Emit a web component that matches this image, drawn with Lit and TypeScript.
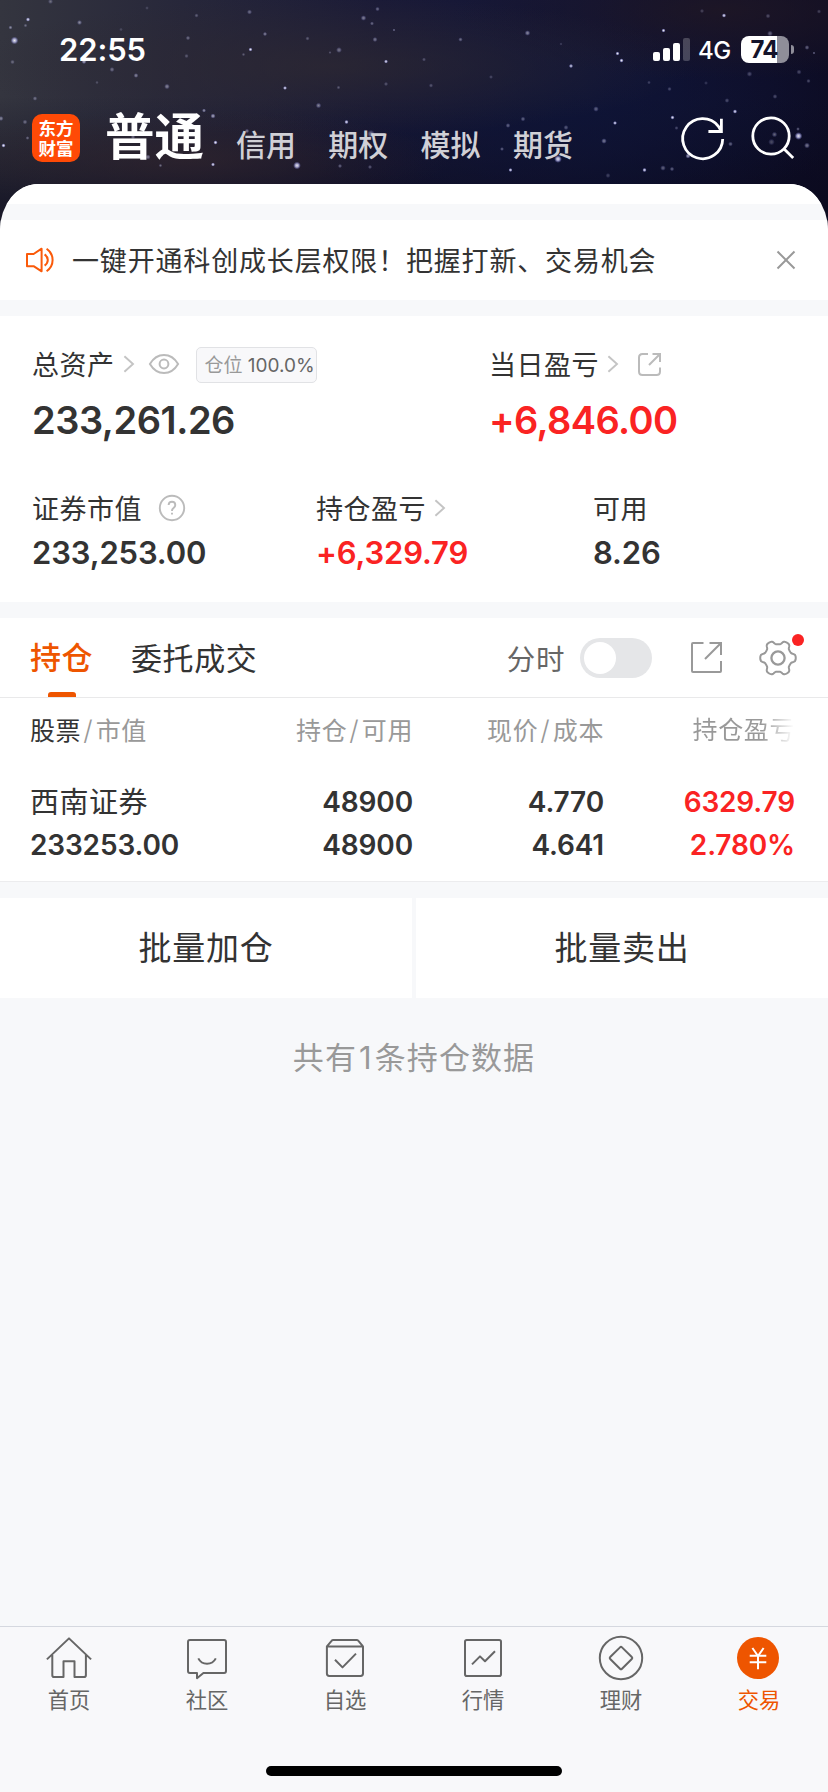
import { LitElement, html, css, svg } from "lit";
import { customElement } from "lit/decorators.js";
import { classMap } from "lit/directives/class-map.js";

// x, y, radius, opacity
const STARS: number[][] = [
  [28, 19.5, 1.7, 1], [14.5, 40.5, 3, 1], [10.5, 27.5, 1.6, 0.5], [25.5, 25.5, 1.5, 0.35], [79.5, 22.5, 2, 0.5],
  [50.5, 1.5, 2, 0.35], [12.5, 62, 1.8, 0.35], [84, 61.5, 2, 0.7], [112, 69.5, 2, 0.4], [136, 75.5, 1.9, 0.5],
  [97, 82.5, 1.4, 0.25], [167, 86.5, 2.2, 0.5], [188, 38, 1.8, 0.4], [186.5, 56, 1.7, 0.3], [196.5, 15.5, 1.7, 0.3],
  [250.5, 49.5, 1.6, 1], [243.5, 54.5, 1.4, 0.3], [265, 34, 1.7, 0.5], [249.5, 12, 2, 0.4], [285, 88, 1.6, 1],
  [307.5, 38.5, 1.7, 0.3], [339, 50, 2.3, 0.45], [330, 52.5, 1.2, 0.3], [363.5, 18, 2.2, 0.5], [377.5, 9, 1.8, 0.4],
  [372, 23.5, 1.6, 0.4], [386, 61.5, 1.6, 1], [375, 39.5, 2, 0.45], [386, 84, 1.7, 0.3], [318.5, 105.5, 2.2, 0.5],
  [338.5, 87.5, 1.5, 0.3], [346.5, 122, 1.7, 1], [371, 134, 3.2, 0.5], [35, 98.5, 1.8, 0.4], [1, 118.5, 2, 0.5],
  [25, 122, 1.9, 0.4], [27.5, 138, 1.5, 0.4], [3.5, 145.5, 1.7, 1], [204, 110.5, 1.6, 0.6], [213, 116, 2, 0.7],
  [215.5, 142.5, 1.7, 1], [213, 164.5, 1.6, 1], [247, 131, 1.8, 0.5], [160.5, 165.5, 1.4, 0.4], [148, 157, 2, 0.5],
  [297, 165.5, 3, 1], [340, 166, 1.7, 0.4], [370, 167, 1.7, 0.35], [133, 137, 1.8, 0.4], [121, 29.5, 1.5, 0.2],
  [147, 8, 1.5, 0.2], [527.5, 33, 2.2, 0.55], [460.5, 39.5, 1.8, 0.4], [424, 59.5, 1.6, 0.3], [663.5, 30.5, 1.6, 1],
  [724, 15.5, 1.7, 1], [617.5, 53.5, 1.6, 1], [621.5, 60.5, 1.7, 1], [571, 66, 1.7, 0.9], [431, 85.5, 1.7, 0.3],
  [491, 77, 1.6, 0.25], [596, 109, 2.2, 0.4], [523, 119, 1.9, 0.4], [508, 125.5, 1.9, 0.4], [615, 123, 1.6, 1],
  [604, 141, 2.2, 0.5], [566, 127.5, 2, 0.35], [502, 149, 1.6, 0.4], [558, 159, 3, 1], [510.5, 170, 1.6, 1],
  [644.5, 170, 1.7, 1], [672.5, 117.5, 1.7, 0.95], [676.5, 128, 1.6, 0.3], [688, 156, 2, 0.7], [735, 111.5, 1.7, 1],
  [727, 100.5, 1.9, 0.3], [775, 96.5, 1.9, 0.3], [669.5, 89, 1.7, 0.3], [649, 82.5, 1.5, 0.25], [749.5, 74, 2.2, 0.3],
  [770, 33.5, 2.3, 0.4], [807, 47.5, 1.9, 0.4], [814, 53, 1.2, 0.4], [799, 72, 2, 0.3], [808.5, 81, 1.7, 0.3],
  [768, 16, 1.9, 0.3], [702, 11, 1.7, 0.25], [819, 11.5, 1.7, 0.25], [798.5, 136, 3, 1], [807, 145.5, 2.3, 0.5],
  [798, 129, 1.5, 0.4], [774.5, 134.5, 2.2, 0.4], [771.5, 142, 2.6, 0.3], [730.5, 144, 1.9, 0.4], [663, 168, 2.2, 0.4],
  [672, 169, 1.8, 0.4], [608, 175.5, 2, 0.25], [561, 44, 1.3, 0.2], [706, 83, 1.6, 0.2], [394, 30, 1.2, 0.4],
];

const chevron = () => svg`<svg class="chev" width="12" height="18" viewBox="0 0 12 18" fill="none"
  stroke="#c4c4c4" stroke-width="1.9"><path d="M1.4 1.3 10 9 1.4 16.7"/></svg>`;

const GEAR = (() => {
  // Six rounded lobes with shallow notches between them.
  const pts: string[] = [];
  for (let i = 0; i <= 180; i++) {
    const a = (i / 180) * Math.PI * 2;
    const c = Math.cos(6 * a);
    const r = 15.7 + 1.9 * Math.tanh(2.1 * c) + 0.2 * c;
    pts.push(`${(19 + r * Math.cos(a)).toFixed(2)} ${(19 + r * Math.sin(a)).toFixed(2)}`);
  }
  return `M${pts.join("L")}Z`;
})();

const NAV = [
  { label: "首页", icon: svg`<path d="M.9 22.4 23 1.4 45.1 22.4M6.3 18V38.2Q6.3 40 8 40H17.5V24.3H28.5V40H38Q39.9 40 39.9 38.2V18"/>` },
  { label: "社区", icon: svg`<path d="M5.9 3H40.1Q42 3 42 4.9V34.1Q42 36 40.1 36H19.4L13 41.2V36H5.9Q4 36 4 34.1V4.9Q4 3 5.9 3ZM14.3 21.4C18 28.6 28 28.6 31.8 21.4"/>` },
  { label: "自选", icon: svg`<path d="M4.9 9.4H41V36.6Q41 39 38.6 39H7.3Q4.9 39 4.9 36.6V9.4L9.8 3.7Q10.3 3 11.2 3H34.8Q35.6 3 36.2 3.7L41 9.4M13 22.8 20.5 30.4 34 16.6"/>` },
  { label: "行情", icon: svg`<rect x="5" y="3" width="36" height="36" rx="1.8"/><path d="M12 27.4 20 19.4 25 24.2 35 14.2"/>` },
  { label: "理财", icon: svg`<circle cx="23" cy="21" r="21.2"/><path d="M22 10.4Q23 9.4 24 10.4L33.8 20Q34.8 21 33.8 22L24 31.8Q23 32.8 22 31.8L12.2 22Q11.2 21 12.2 20Z"/>` },
  { label: "交易", active: true, icon: svg`<circle cx="22" cy="21" r="21" fill="#ee5500" stroke="none"/><path stroke="#fff" d="M16.4 11 22 19 27.6 11M22 19V32.2M13.7 18.7H30.3M13.7 25.2H30.3"/>` },
];

@customElement("app-root")
export class AppRoot extends LitElement {
  static styles = css`
    :host {
      display: block; position: relative; width: 828px; height: 1792px; overflow: hidden;
      background: #f7f8fa; color: #333;
      font-family: Inter, "Noto Sans CJK SC", sans-serif;
    }
    * { box-sizing: border-box; }
    svg { display: block; flex: none; overflow: visible; }
    .page { position: relative; height: 100%; display: flex; flex-direction: column; }
    .sky {
      position: absolute; left: 0; top: 0; width: 828px; height: 240px;
      background:
        radial-gradient(ellipse 260px 50px at 190px 160px, rgba(52, 38, 44, .6), transparent),
        radial-gradient(ellipse 360px 70px at 330px 66px, rgba(46, 41, 50, .75), transparent),
        radial-gradient(ellipse 260px 70px at 720px 10px, rgba(32, 23, 36, .8), transparent),
        radial-gradient(ellipse 300px 110px at 560px 110px, rgba(14, 20, 54, .8), transparent),
        linear-gradient(180deg, transparent 40%, rgba(10, 9, 28, .65) 85%),
        linear-gradient(90deg, #34353f 0, #27273a 22%, #1a1a37 46%, #111436 72%, #0d0c24 100%);
    }
    .status { height: 98px; padding: 32px 34px 0 59px; display: flex; align-items: flex-start; color: #fff; }
    .time { flex: 1; font-size: 31px; line-height: 36px; font-weight: 600; letter-spacing: -.1px; }
    .bars { margin: 6px 8px 0 0; }
    .net { width: 43px; font-size: 24px; line-height: 37px; font-weight: 500; letter-spacing: -.4px; }
    .battery {
      margin-top: 4px; width: 48px; height: 27px; border-radius: 8px; text-align: center;
      background: linear-gradient(90deg, #fff 36px, #8f8e99 36px);
      color: #14142b; font-size: 24px; font-weight: 700; line-height: 28px; letter-spacing: -.8px; padding-right: 2px;
    }
    .nub { margin: 13px 0 0 2px; width: 3px; height: 9px; border-radius: 0 3px 3px 0; background: #8f8e99; }
    .head { height: 86px; display: flex; padding: 16px 34px 0 32px; color: #fff; }
    .logo {
      width: 48px; height: 48px; border-radius: 10px; background: #ff4a06; padding: 4px 6px 0;
      font: 700 17.5px/20px "Noto Sans CJK SC", sans-serif; text-align: center; word-break: break-all;
    }
    .cur { margin: -7px 0 0 25px; width: 99px; font-size: 49.5px; line-height: 60px; font-weight: 600; white-space: nowrap; }
    .tab { margin-left: 4px; margin-top: 11px; width: 88.3px; font-size: 30px; line-height: 40px; font-weight: 500; color: #d0d0d6; padding-left: 1px; }
    .tabs { display: flex; flex: 1; padding-left: 27px; }
    .sheet { border-radius: 38px 38px 0 0 / 46px 46px 0 0; overflow: hidden; background: #f7f8fa; flex: 1; display: flex; flex-direction: column; }
    .lip { height: 20px; background: #fff; }
    .notice {
      margin-top: 16px; height: 80px; background: #fff; display: flex; align-items: center; padding: 0 33px 0 26px;
      font-size: 27px; letter-spacing: .83px;
    }
    .notice span { flex: 1; padding: 0 0 2px 18px; white-space: nowrap; }
    .assets { margin-top: 16px; height: 286px; background: #fff; padding: 28px 32px 0; }
    .top { display: grid; grid-template-columns: 457px 1fr; height: 144px; align-content: start; }
    .sub { display: grid; grid-template-columns: 284px 277px 1fr; }
    .label { height: 40px; display: flex; align-items: center; font-size: 27px; letter-spacing: .5px; white-space: nowrap; }
    .label > span { padding-bottom: 2px; }
    .chev { margin-left: 8px; }
    .eye { margin-left: 14px; }
    .pos {
      margin: 2px 0 0 17px; width: 121px; height: 36px; border: 1.5px solid #e1e2e5; border-radius: 5px; background: #f8f8fa;
      font-size: 19px; line-height: 35px; color: #999; letter-spacing: 0; padding-left: 8px;
    }
    .pos b { font-weight: 400; color: #666; letter-spacing: 0; }
    .big { margin-top: 11px; font-size: 38px; line-height: 50px; font-weight: 600; letter-spacing: -.45px; }
    .big.red { letter-spacing: -.6px; }
    .mid { margin-top: 5px; font-size: 31px; line-height: 40px; font-weight: 600; letter-spacing: -.15px; }
    .red { color: #fa2323; }
    .holdings { margin-top: 16px; height: 264px; background: #fff; border-bottom: 1px solid #ececee; }
    .bar { height: 80px; border-bottom: 1px solid #e9e9ea; display: flex; align-items: center; padding: 0 31px 0 30px; font-size: 31px; letter-spacing: .6px; }
    .on { color: #ee5500; font-weight: 500; height: 79px; line-height: 80px; width: 64px; margin-right: 37px; display: flex; flex-direction: column; white-space: nowrap; }
    .on::after { content: ""; width: 28px; height: 5px; border-radius: 3px 3px 0 0; background: #ee5500; margin: -6px 0 0 18px; }
    .orders { flex: 1; padding-bottom: 3px; }
    .fs { font-size: 28.5px; color: #666; margin-right: 15px; padding-bottom: 1px; }
    .toggle { width: 72px; height: 40px; border-radius: 20px; background: #e5e6e8; padding: 4px; margin-right: 39px; }
    .toggle i { display: block; width: 32px; height: 32px; border-radius: 50%; background: #fff; }
    .gear { position: relative; margin-left: 37px; }
    .dot { position: absolute; left: 33px; top: -5px; width: 12px; height: 12px; border-radius: 50%; background: #fa2323; }
    .row { display: grid; grid-template-columns: 193px 190px 191px 191px; padding-left: 30px; text-align: right; white-space: nowrap; }
    .row > :first-child { text-align: left; }
    .th { height: 64px; line-height: 65px; font-size: 25px; color: #999; letter-spacing: .6px; }
    .th em { font-style: normal; color: #333; }
    .th u { text-decoration: none; padding: 0 2.5px 0 2px; font-weight: 300; font-size: 27px; }
    .fade { background: linear-gradient(90deg, #999 158px, #fff 190px); -webkit-background-clip: text; color: transparent; }
    .td { font-size: 28px; font-weight: 600; line-height: 43px; letter-spacing: -.15px; }
    .td.first { margin-top: 19px; }
    .td .name { font-size: 29px; font-weight: 400; letter-spacing: .5px; }
    .batch { margin-top: 16px; display: grid; grid-template-columns: 1fr 1fr; gap: 4px; }
    .batch div { height: 100px; line-height: 101px; background: #fff; text-align: center; font-size: 33px; letter-spacing: .8px; }
    .count { margin-top: 40px; text-align: center; font-size: 31px; line-height: 40px; color: #999; letter-spacing: 1.1px; flex: 1; }
    .count span { padding: 0 2px; }
    .nav { height: 166px; border-top: 1px solid #d5d8df; background: #f8f8fa; display: flex; flex-direction: column; align-items: center; }
    .items { display: grid; grid-template-columns: repeat(6, 138px); padding-top: 10px; height: 139px; }
    .item { display: flex; flex-direction: column; align-items: center; font-size: 21.3px; line-height: 30px; color: #666; gap: 6px; }
    .item svg { fill: none; stroke: #666; stroke-width: 2; stroke-linejoin: round; }
    .item.active { color: #ee5500; }
    .home { width: 296px; height: 10px; border-radius: 5px; background: #000; }
  `;

  render() {
    return html`
      <svg class="sky" viewBox="0 0 828 240">
        <defs><radialGradient id="star">
          <stop offset="0" stop-color="#fff"/><stop offset=".45" stop-color="#cfcfff" stop-opacity=".8"/>
          <stop offset="1" stop-color="#8080e0" stop-opacity="0"/>
        </radialGradient></defs>
        ${STARS.map(([x, y, r, o]) => svg`<circle cx=${x} cy=${y} r=${r * 1.3} opacity=${o * 0.9} fill="url(#star)"/>`)}
      </svg>
      <div class="page">
        <div class="status">
          <div class="time">22:55</div>
          <svg class="bars" width="37" height="23" viewBox="0 0 37 23" fill="#fff">
            <rect y="14" width="7" height="9" rx="2"/><rect x="10" y="10" width="7" height="13" rx="2"/>
            <rect x="20" y="5" width="7" height="18" rx="2"/><rect x="30" width="7" height="23" rx="2" opacity=".22"/>
          </svg>
          <div class="net">4G</div>
          <div class="battery">74</div><div class="nub"></div>
        </div>
        <div class="head">
          <div class="logo">东方财富</div>
          <div class="cur">普通</div>
          <div class="tabs">${["信用", "期权", "模拟", "期货"].map((t) => html`<div class="tab">${t}</div>`)}</div>
          <svg width="112" height="48" viewBox="682 114 112 48" fill="none" stroke="#fff" stroke-width="2.8">
            <path d="M722.7 139A20 20 0 1 1 718.4 126.3L721.4 131.4M721.4 118.8V131.5H708.4"/>
            <circle cx="771" cy="136" r="18.2"/><path d="M783.6 148.6 793.2 158"/>
          </svg>
        </div>
        <div class="sheet">
          <div class="lip"></div>
          <div class="notice">
            <svg width="28" height="26" viewBox="0 0 28 26" fill="none" stroke="#fa5a0a" stroke-width="2" stroke-linejoin="round">
              <path d="M1 7H7.6L15.6 1.7V24.3L7.6 19.2H1ZM18.6 7.4Q21.8 9.6 21.8 13T18.6 18.6M20.6 1.8Q26.6 6 26.6 13T20.6 24.2"/>
            </svg>
            <span>一键开通科创成长层权限！把握打新、交易机会</span>
            <svg width="18" height="18" viewBox="0 0 18 18" stroke="#999" stroke-width="2"><path d="M.5.5 17.5 17.5M17.5.5.5 17.5"/></svg>
          </div>
          <div class="assets">
            <div class="top">
              <div>
                <div class="label"><span>总资产</span>${chevron()}
                  <svg class="eye" width="30" height="20" viewBox="0 0 30 20" fill="none" stroke="#bbb" stroke-width="2">
                    <path d="M.9 10C8 -2 22 -2 29.1 10C22 22 8 22 .9 10Z"/><circle cx="15" cy="10" r="4.4"/></svg>
                  <div class="pos">仓位 <b>100.0%</b></div>
                </div>
                <div class="big">233,261.26</div>
              </div>
              <div>
                <div class="label"><span>当日盈亏</span>${chevron()}
                  <svg width="42" height="24" viewBox="-19 0 42 24" fill="none" stroke="#bbb" stroke-width="2">
                    <path d="M10 2H4.5Q1 2 1 5.5V19.5Q1 23 4.5 23H18.5Q22 23 22 19.5V15.5M14.5 2H22V10M22 2 11 13"/></svg>
                </div>
                <div class="big red">+6,846.00</div>
              </div>
            </div>
            <div class="sub">
              <div>
                <div class="label"><span>证券市值</span>
                  <svg width="43" height="26" viewBox="-17 0 43 26" fill="none" stroke="#bbb" stroke-width="1.9">
                    <circle cx="13" cy="13" r="12.2"/><path d="M9.6 10Q9.8 6.8 13 6.8T16.3 10Q16.3 11.6 14.6 12.9T13 16M13 17.8V19.6"/></svg>
                </div>
                <div class="mid">233,253.00</div>
              </div>
              <div><div class="label"><span>持仓盈亏</span>${chevron()}</div><div class="mid red">+6,329.79</div></div>
              <div><div class="label"><span>可用</span></div><div class="mid">8.26</div></div>
            </div>
          </div>
          <div class="holdings">
            <div class="bar">
              <div class="on">持仓</div><div class="orders">委托成交</div>
              <div class="fs">分时</div><div class="toggle"><i></i></div>
              <svg width="31" height="31" viewBox="0 0 31 31" fill="none" stroke="#999" stroke-width="2">
                <path d="M12.5 1H2Q1 1 1 2V29Q1 30 2 30H29Q30 30 30 29V19M18.5 1H30V13M30 1 14 17"/></svg>
              <div class="gear">
                <svg width="38" height="38" viewBox="0 0 38 38" fill="none" stroke="#999" stroke-width="2">
                  <path d=${GEAR}/><circle cx="19" cy="19" r="6.6" stroke-width="2.3"/></svg>
                <span class="dot"></span>
              </div>
            </div>
            <div class="row th"><div><em>股票</em><u>/</u>市值</div><div>持仓<u>/</u>可用</div><div>现价<u>/</u>成本</div><div class="fade">持仓盈亏</div></div>
            <div class="row td first"><div class="name">西南证券</div><div>48900</div><div>4.770</div><div class="red">6329.79</div></div>
            <div class="row td"><div>233253.00</div><div>48900</div><div>4.641</div><div class="red">2.780%</div></div>
          </div>
          <div class="batch"><div>批量加仓</div><div>批量卖出</div></div>
          <div class="count">共有<span>1</span>条持仓数据</div>
          <div class="nav">
            <div class="items">
              ${NAV.map((n) => html`<div class=${classMap({ item: true, active: !!n.active })}>
                <svg width="46" height="42" viewBox="0 0 46 42">${n.icon}</svg><span>${n.label}</span></div>`)}
            </div>
            <div class="home"></div>
          </div>
        </div>
      </div>`;
  }
}
